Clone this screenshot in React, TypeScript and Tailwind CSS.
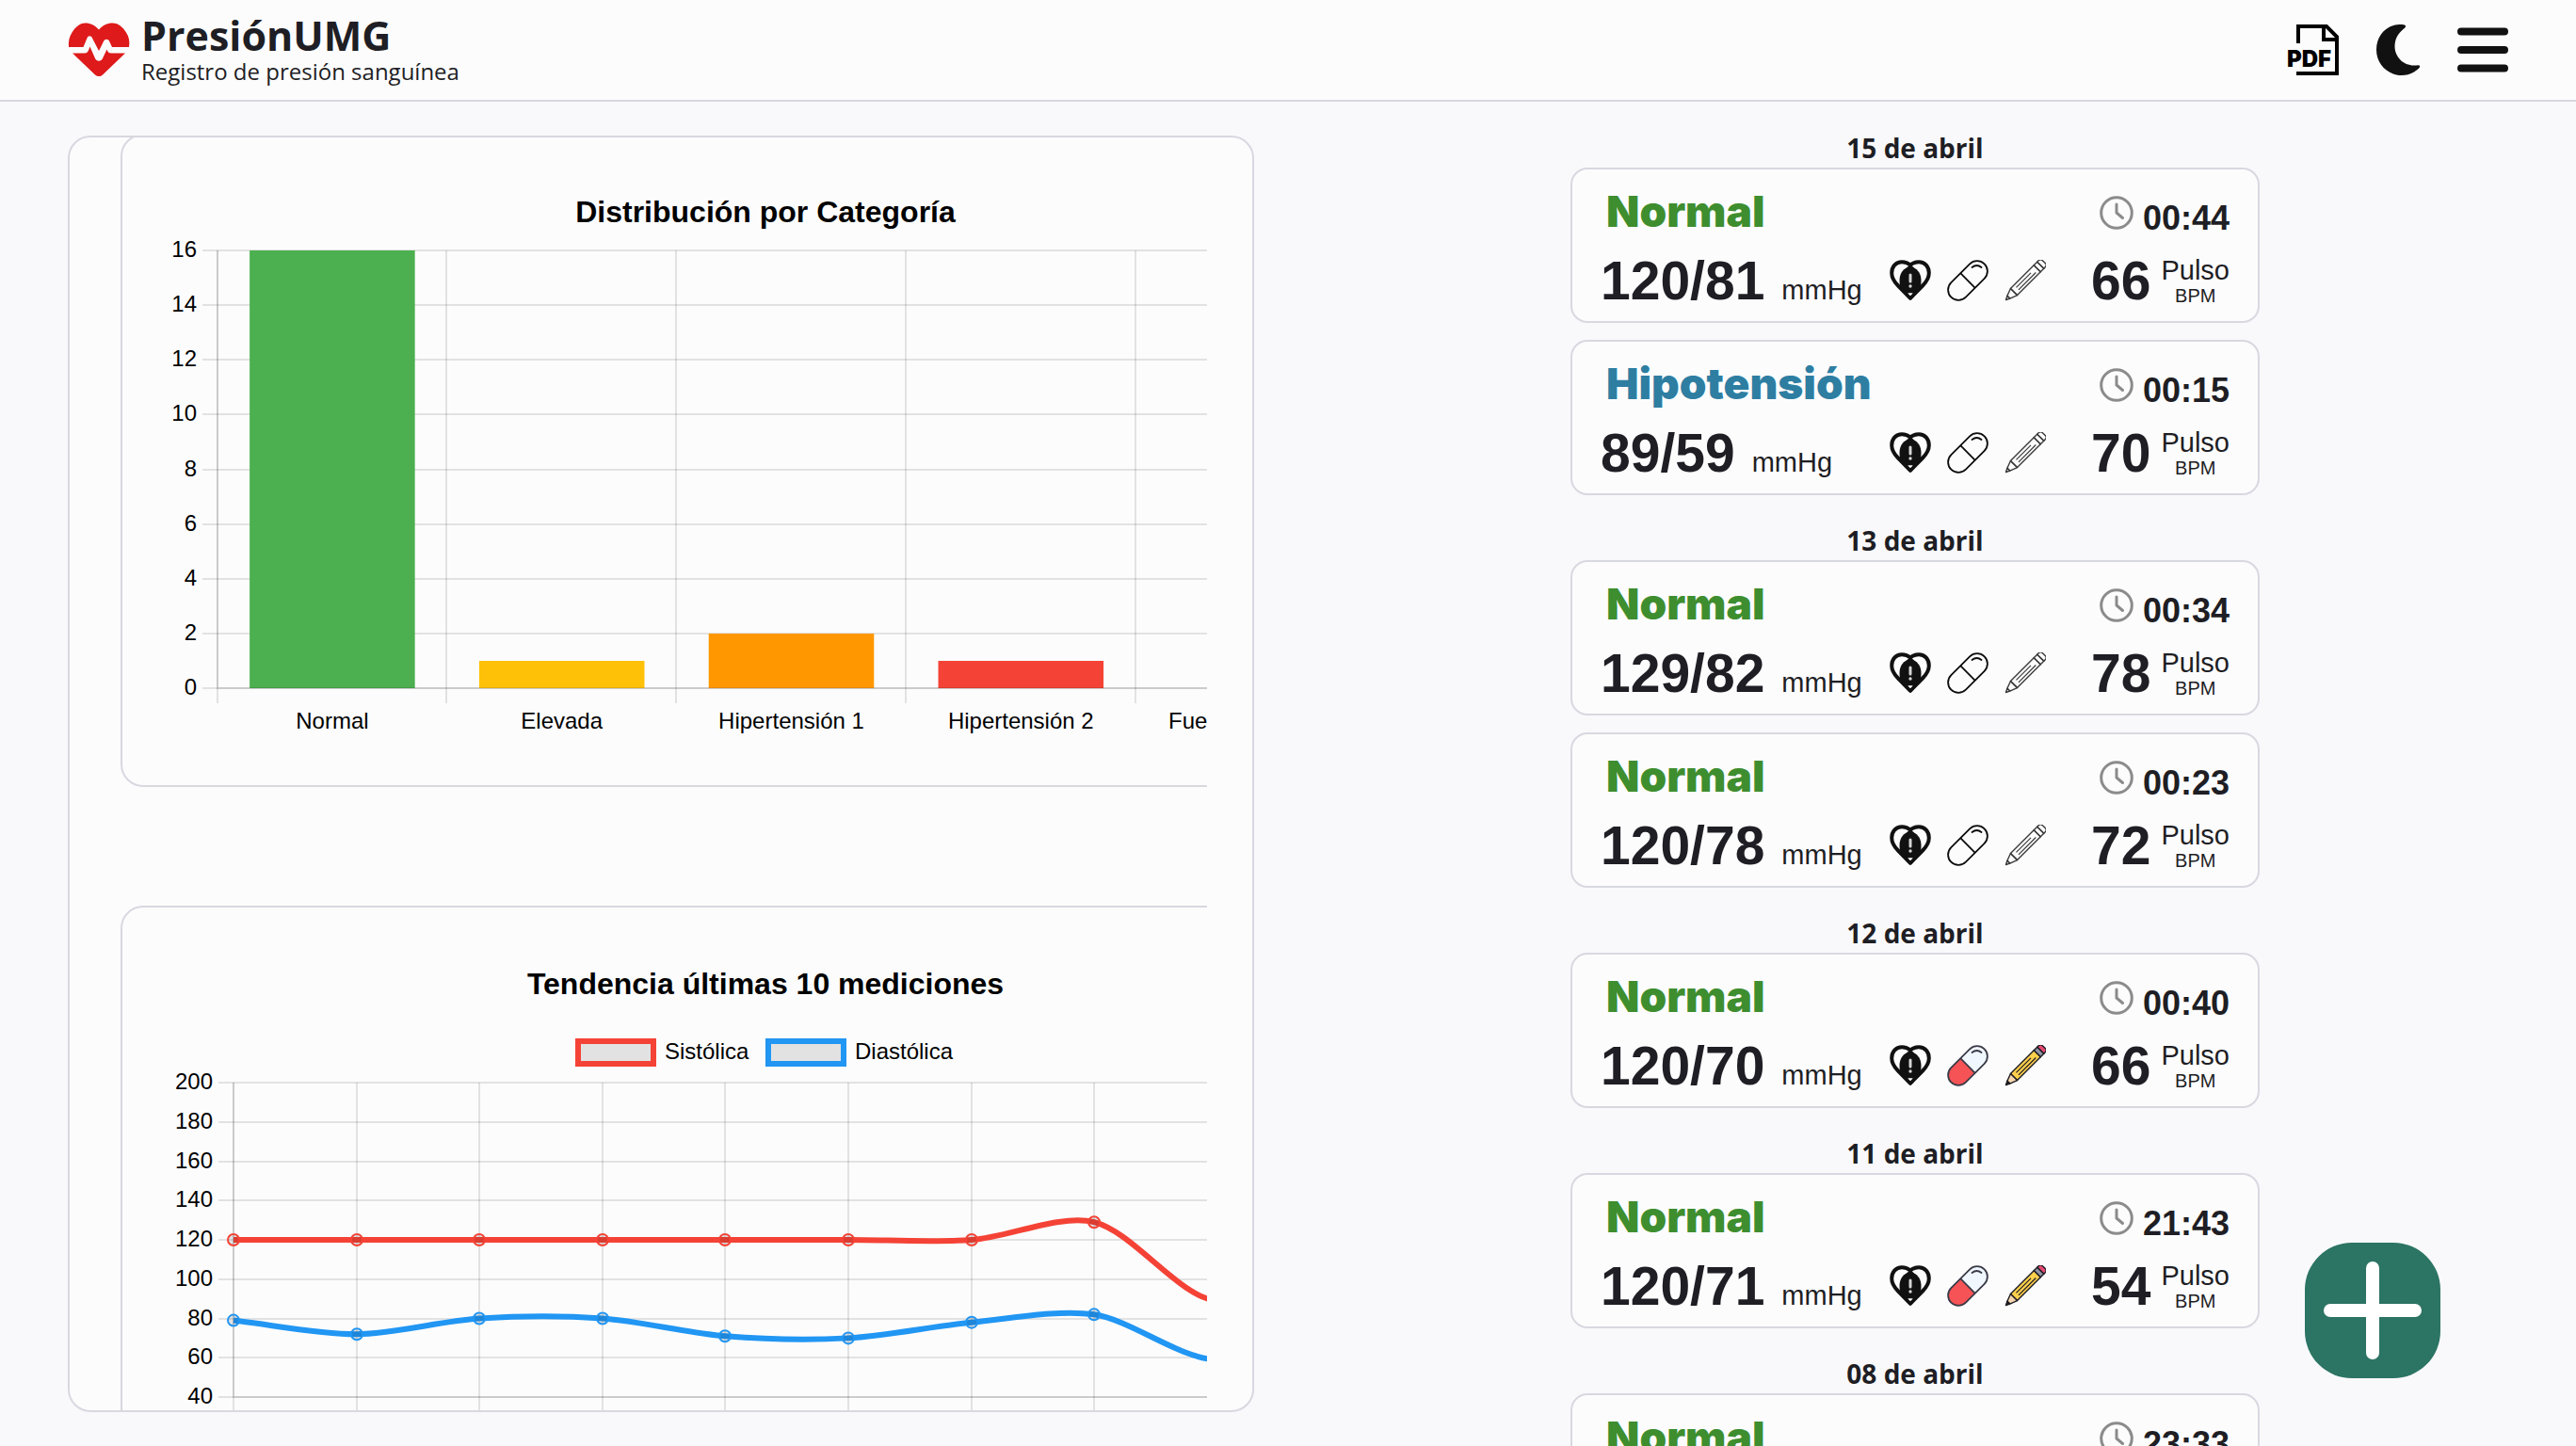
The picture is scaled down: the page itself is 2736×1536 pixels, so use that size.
import React from "react";

type Reading = {
  category: "Normal" | "Hipotensión";
  time: string;
  pressure: string;
  pulse: number;
  pill: boolean;
  note: boolean;
};

const days: { label: string; readings: Reading[] }[] = [
  {
    label: "15 de abril",
    readings: [
      { category: "Normal", time: "00:44", pressure: "120/81", pulse: 66, pill: false, note: false },
      { category: "Hipotensión", time: "00:15", pressure: "89/59", pulse: 70, pill: false, note: false },
    ],
  },
  {
    label: "13 de abril",
    readings: [
      { category: "Normal", time: "00:34", pressure: "129/82", pulse: 78, pill: false, note: false },
      { category: "Normal", time: "00:23", pressure: "120/78", pulse: 72, pill: false, note: false },
    ],
  },
  {
    label: "12 de abril",
    readings: [{ category: "Normal", time: "00:40", pressure: "120/70", pulse: 66, pill: true, note: true }],
  },
  {
    label: "11 de abril",
    readings: [{ category: "Normal", time: "21:43", pressure: "120/71", pulse: 54, pill: true, note: true }],
  },
  {
    label: "08 de abril",
    readings: [{ category: "Normal", time: "23:33", pressure: "120/80", pulse: 68, pill: true, note: true }],
  },
];

function LogoIcon() {
  return (
    <svg viewBox="0 0 66 58" className="h-[58px] w-[66px] shrink-0" aria-hidden="true">
      <path
        d="M33 7.500C29 3 24 .5 18.500 .5C12.500 .5 8 5 4.500 10.500C1.500 15 .5 20 1 26H16.500L20.500 16.500C21.500 13.500 25 13.500 26 16.500L33 30L38 20C39.200 17 43 17 44.200 20L47 26H65C66 20 65 15 62 10.500C58.500 5 54 .5 47.500 .5C42 .5 37 3 33 7.500Z"
        fill="#de1a1a"
      />
      <path
        d="M5 32.500H18C20 32.500 21 31.500 22 29.500L23.500 25.500L29 38C30.500 41.500 35.500 41.500 37 38L41.500 28.500C42.500 31.500 44 32.500 46 32.500H61L37 55.500C34.500 57.500 31.500 57.500 29 55.500Z"
        fill="#de1a1a"
      />
    </svg>
  );
}

function PdfIcon() {
  return (
    <svg viewBox="0 0 54 54" className="size-[54px] overflow-visible" aria-hidden="true">
      <path d="M11 20V2H41L52 13V52H9" fill="none" stroke="#000" strokeWidth="4" />
      <path d="M38 3V16H52" fill="none" stroke="#000" strokeWidth="4" />
      <text x="-1" y="45" fontFamily="Inter, sans-serif" fontWeight="900" fontSize="24" fill="#000">
        PDF
      </text>
    </svg>
  );
}

function MoonIcon() {
  return (
    <svg viewBox="0 0 54 54" className="size-[54px]" aria-hidden="true">
      <path
        d="M28 0C31 0 34.500 0 35 1.500C35.300 3 34 3.800 32.500 5C26.500 10 23.500 16 23.500 23C23.500 34.500 32.500 43.500 44 43.500C46.500 43.500 49 42.600 50 43.800C51 46 47 48.500 44 50.500C40 53 35 54 31 54C16 54 4 42 4 27C4 12 14 1 28 0Z"
        fill="#111"
      />
    </svg>
  );
}

function MenuIcon() {
  return (
    <svg viewBox="0 0 54 54" className="size-[54px]" aria-hidden="true">
      <path d="M4 7.500H50M4 27H50M4 46.500H50" stroke="#111" strokeWidth="8" strokeLinecap="round" />
    </svg>
  );
}

function HeartAlertIcon() {
  return (
    <svg viewBox="0 0 44 44" className="size-[44px]" aria-hidden="true">
      <path
        d="M22 5.500C19 2.800 16 2.200 13 2.200C6.500 2.200 2.200 7.500 2.200 14C2.200 20 5.500 24 9 27.500L22 40.800L35 27.500C38.500 24 41.800 20 41.800 14C41.800 7.500 37.500 2.200 31 2.200C28 2.200 25 2.800 22 5.500Z"
        fill="none"
        stroke="#111"
        strokeWidth="4"
        strokeLinejoin="round"
      />
      <path d="M15 11L22 5L29 11Z" fill="#111" />
      <path d="M22 8C29 8 33.500 14 33.500 22C33.500 26 33 30 31 32.500L26 35.500H18L13 32.500C11 30 10.500 26 10.500 22C10.500 14 15 8 22 8Z" fill="#111" />
      <path d="M19.500 35.500H24.500L22 38Z" fill="#fcfcfd" />
      <path d="M22 16V23" stroke="#d5d5d5" strokeWidth="3" strokeLinecap="round" />
      <circle cx="22" cy="28" r="1.700" fill="#d5d5d5" />
    </svg>
  );
}

function PillIcon({ active }: { active: boolean }) {
  const line = active ? "#3b3b47" : "#0c0c0c";
  return (
    <svg viewBox="0 0 44 44" className="size-[44px]" aria-hidden="true">
      <g transform="rotate(45 22 22)">
        <rect x="11" y="-3" width="22" height="50" rx="11" fill={active ? "#f0f7ff" : "none"} />
        {active && <path d="M11 22H33V36A11 11 0 0 1 11 36Z" fill="#f65356" />}
        <rect x="11" y="-3" width="22" height="50" rx="11" fill="none" stroke={line} strokeWidth="1.800" />
        <path d="M11 22H33" stroke={line} strokeWidth="1.800" />
      </g>
      <path d="M26.500 8Q31.500 4 36.500 8" fill="none" stroke={line} strokeWidth="1.800" strokeLinecap="round" />
    </svg>
  );
}

function PencilIcon({ active }: { active: boolean }) {
  const line = active ? "#1c1c22" : "#3a3a3a";
  return (
    <svg viewBox="0 0 44 44" className="size-[44px]" aria-hidden="true">
      <g transform="rotate(45 22 22)" stroke={line} strokeWidth="1.400" strokeLinejoin="round">
        <path d="M17 -1V-3Q17 -6 20 -6H24Q27 -6 27 -3V-1Z" fill={active ? "#e64a72" : "none"} />
        <path d="M17 -1H27V4H17Z" fill={active ? "#8f93a3" : "none"} />
        <path d="M17 4H27V39H17Z" fill={active ? "#ffd04d" : "none"} />
        <path d="M17 39H27L24 47H20Z" fill={active ? "#f5d5ae" : "none"} />
        <path d="M20 47H24L22 51Z" fill={active ? "#1c1c22" : "none"} />
        <path d="M20.500 34V12M24 8V34" fill="none" strokeWidth="1.200" />
      </g>
    </svg>
  );
}

function ClockIcon() {
  return (
    <svg viewBox="0 0 36 36" className="size-9" fill="none" stroke="#8b8b8b" strokeWidth="3" strokeLinecap="round" aria-hidden="true">
      <circle cx="18" cy="18" r="16.300" />
      <path d="M18 9V18L24.500 23.500" strokeLinejoin="round" />
    </svg>
  );
}

const axisFont = '"Liberation Sans", Arial, sans-serif';

function ChartTitle({ y, children }: { y: number; children: string }) {
  return (
    <text x="683" y={y} textAnchor="middle" fontFamily={axisFont} fontWeight="700" fontSize="32" fill="#000">
      {children}
    </text>
  );
}

const bars = [
  { label: "Normal", value: 16, color: "#4caf50" },
  { label: "Elevada", value: 1, color: "#ffc107" },
  { label: "Hipertensión 1", value: 2, color: "#ff9800" },
  { label: "Hipertensión 2", value: 1, color: "#f44336" },
];

function CategoryChart() {
  const left = 101;
  const top = 122;
  const bottom = 587;
  const step = 243.8;
  const yOf = (v: number) => Math.round(bottom - ((bottom - top) * v) / 16);
  const xOf = (i: number) => Math.floor(left + step * i);
  return (
    <svg viewBox="0 0 1370 690" className="block h-[690px] w-[1370px]" role="img" aria-label="Distribución por Categoría">
      <ChartTitle y={92}>Distribución por Categoría</ChartTitle>
      <g fontFamily={axisFont} fontSize="24" fill="#000">
        {[0, 2, 4, 6, 8, 10, 12, 14, 16].map((v) => (
          <g key={v}>
            <path d={`M85 ${yOf(v)}H1320`} stroke="#000" strokeOpacity="0.1" strokeWidth="2" />
            <text x="79" y={yOf(v) + 7} textAnchor="end">
              {v}
            </text>
          </g>
        ))}
        {[0, 1, 2, 3, 4, 5].map((i) => (
          <path key={i} d={`M${xOf(i)} ${top}V603`} stroke="#000" strokeOpacity="0.1" strokeWidth="2" />
        ))}
        {bars.map((b, i) => (
          <g key={b.label}>
            <rect x={left + step * (i + 0.14)} y={yOf(b.value)} width={step * 0.72} height={bottom - yOf(b.value)} fill={b.color} />
            <text x={left + step * (i + 0.5)} y="630" textAnchor="middle">
              {b.label}
            </text>
          </g>
        ))}
        <text x="1111" y="630">
          Fue
        </text>
      </g>
      <path d={`M${left} ${top}V${bottom}H1320`} fill="none" stroke="#000" strokeOpacity="0.1" strokeWidth="2" />
    </svg>
  );
}

const systolic = [120, 120, 120, 120, 120, 120, 120, 129, 89, 120];
const diastolic = [79, 72, 80, 80, 71, 70, 78, 82, 59, 81];

type Point = { x: number; y: number };

/* Cubic spline whose handles are split by the distance to each neighbour. */
function splinePath(pts: Point[], tension: number) {
  const handles = pts.map((p, i) => {
    const a = pts[Math.max(i - 1, 0)];
    const b = pts[Math.min(i + 1, pts.length - 1)];
    const da = Math.hypot(p.x - a.x, p.y - a.y);
    const db = Math.hypot(b.x - p.x, b.y - p.y);
    const sum = da + db || 1;
    const fa = (tension * da) / sum;
    const fb = (tension * db) / sum;
    return {
      before: { x: p.x - fa * (b.x - a.x), y: p.y - fa * (b.y - a.y) },
      after: { x: p.x + fb * (b.x - a.x), y: p.y + fb * (b.y - a.y) },
    };
  });
  let d = `M${pts[0].x} ${pts[0].y}`;
  for (let i = 1; i < pts.length; i++) {
    const c1 = handles[i - 1].after;
    const c2 = handles[i].before;
    d += `C${c1.x} ${c1.y} ${c2.x} ${c2.y} ${pts[i].x} ${pts[i].y}`;
  }
  return d;
}

function TrendChart() {
  const left = 118;
  const top = 186;
  const bottom = 520;
  const step = 130.6;
  const yOf = (v: number) => bottom - ((bottom - top) * (v - 40)) / 160;
  const xOf = (i: number) => Math.round(left + step * i);
  const series = [
    { label: "Sistólica", values: systolic, color: "#f44336", box: 484, text: 576 },
    { label: "Diastólica", values: diastolic, color: "#2196f3", box: 686, text: 778 },
  ];
  return (
    <svg viewBox="0 0 1370 690" className="block h-[690px] w-[1370px]" role="img" aria-label="Tendencia últimas 10 mediciones">
      <ChartTitle y={92}>Tendencia últimas 10 mediciones</ChartTitle>
      <g fontFamily={axisFont} fontSize="24" fill="#000">
        {series.map((s) => (
          <g key={s.label}>
            <rect x={s.box} y="142" width="80" height="24" fill="#000" fillOpacity="0.1" />
            <rect x={s.box} y="142" width="80" height="24" fill="none" stroke={s.color} strokeWidth="6" />
            <text x={s.text} y="161">
              {s.label}
            </text>
          </g>
        ))}
        {[40, 60, 80, 100, 120, 140, 160, 180, 200].map((v) => (
          <g key={v}>
            <path d={`M102 ${Math.round(yOf(v))}H1320`} stroke="#000" strokeOpacity="0.1" strokeWidth="2" />
            <text x="96" y={Math.round(yOf(v)) + 7} textAnchor="end">
              {v}
            </text>
          </g>
        ))}
        {systolic.map((_, i) => (
          <path key={i} d={`M${xOf(i)} ${top}V536`} stroke="#000" strokeOpacity="0.1" strokeWidth="2" />
        ))}
      </g>
      <path d={`M${left} ${top}V${bottom}H1320`} fill="none" stroke="#000" strokeOpacity="0.1" strokeWidth="2" />
      {[...series].reverse().map((s) => {
        const pts = s.values.map((v, i) => ({ x: xOf(i), y: yOf(v) }));
        return (
          <g key={s.label} stroke={s.color}>
            <path d={splinePath(pts, 0.3)} fill="none" strokeWidth="6" />
            {pts.map((p) => (
              <circle key={p.x} cx={p.x} cy={p.y} r="6" fill="#000" fillOpacity="0.1" strokeWidth="2" />
            ))}
          </g>
        );
      })}
    </svg>
  );
}

const categoryColor = {
  Normal: "text-[#3e8e2f]",
  Hipotensión: "text-[#2e7ea2]",
};

function ReadingCard({ r }: { r: Reading }) {
  return (
    <article className="flex h-[165px] flex-col rounded-[18px] border-2 border-[#d8d8e0] bg-[#fcfcfd] px-[30px] pt-[18px]">
      <div className="flex h-[52px] items-end justify-between">
        <h3 className={`pl-[6px] font-[Inter,sans-serif] text-[46px] leading-[52px] font-black ${categoryColor[r.category]}`}>
          {r.category}
        </h3>
        <div className="flex items-end gap-[10px]">
          <div className="pb-[6px]">
            <ClockIcon />
          </div>
          <time className="text-[36px] leading-9 font-bold">{r.time}</time>
        </div>
      </div>
      <div className="flex flex-1 items-center justify-between pt-[5px]">
        <p className="flex items-baseline gap-[18px]">
          <span className="text-[57px] leading-[64px] font-bold">{r.pressure}</span>
          <span className="text-[29px] leading-7">mmHg</span>
        </p>
        <div className="flex items-center gap-12">
          <div className="flex gap-[17px]">
            <button type="button" aria-label="Síntomas">
              <HeartAlertIcon />
            </button>
            <button type="button" aria-label="Medicamento">
              <PillIcon active={r.pill} />
            </button>
            <button type="button" aria-label="Nota">
              <PencilIcon active={r.note} />
            </button>
          </div>
          <p className="flex items-center gap-[11px]">
            <span className="text-[57px] leading-[64px] font-bold">{r.pulse}</span>
            <span className="flex flex-col items-center gap-[3px]">
              <span className="text-[29px] leading-7">Pulso</span>
              <span className="text-[20px] leading-5">BPM</span>
            </span>
          </p>
        </div>
      </div>
    </article>
  );
}

export default function App() {
  return (
    <div className="flex h-screen flex-col overflow-hidden bg-[#f9f9fc] font-['Liberation_Sans',Arial,sans-serif] text-[#1e1e24]">
      <header className="flex h-[108px] shrink-0 items-center justify-between border-b-2 border-[#d8d8e0] bg-[#fcfcfd] px-[72px]">
        <div className="flex items-center gap-3 font-['Open_Sans','Noto_Sans',sans-serif]">
          <LogoIcon />
          <div>
            <h1 className="text-[43px] leading-[46px] font-bold">PresiónUMG</h1>
            <p className="text-[24px] leading-[30px]">Registro de presión sanguínea</p>
          </div>
        </div>
        <nav className="flex gap-9" aria-label="Acciones">
          <button type="button" aria-label="Exportar PDF">
            <PdfIcon />
          </button>
          <button type="button" aria-label="Modo oscuro">
            <MoonIcon />
          </button>
          <button type="button" aria-label="Menú">
            <MenuIcon />
          </button>
        </nav>
      </header>

      <main className="grid min-h-0 flex-1 grid-cols-2 gap-[72px] px-[72px] pt-9">
        <section className="mb-9 min-h-0 overflow-hidden rounded-3xl border-2 border-[#d8d8e0] bg-[#fcfcfd] pr-12 pl-[54px]">
          <div className="flex h-full flex-col gap-[126px] overflow-hidden">
            <div className="-mt-1 w-[1374px] shrink-0 rounded-3xl border-2 border-[#d8d8e0]">
              <CategoryChart />
            </div>
            <div className="w-[1374px] shrink-0 rounded-3xl border-2 border-[#d8d8e0]">
              <TrendChart />
            </div>
          </div>
        </section>

        <section className="flex min-h-0 flex-col items-center">
          <div className="flex w-[732px] flex-col gap-[35px]">
            {days.map((d) => (
              <div key={d.label}>
                <h2 className="pb-2 text-center font-['Open_Sans','Noto_Sans',sans-serif] text-[28px] leading-[26px] font-bold">
                  {d.label}
                </h2>
                <div className="flex flex-col gap-[18px]">
                  {d.readings.map((r) => (
                    <ReadingCard key={r.time} r={r} />
                  ))}
                </div>
              </div>
            ))}
          </div>
        </section>
      </main>

      <button
        type="button"
        aria-label="Agregar medición"
        className="fixed right-[144px] bottom-[72px] flex size-36 items-center justify-center rounded-[50px] bg-[#2c7463]"
      >
        <svg viewBox="0 0 104 104" className="size-[104px]" aria-hidden="true">
          <path d="M52 7V97M7 52H97" stroke="#fff" strokeWidth="14" strokeLinecap="round" />
        </svg>
      </button>
    </div>
  );
}
